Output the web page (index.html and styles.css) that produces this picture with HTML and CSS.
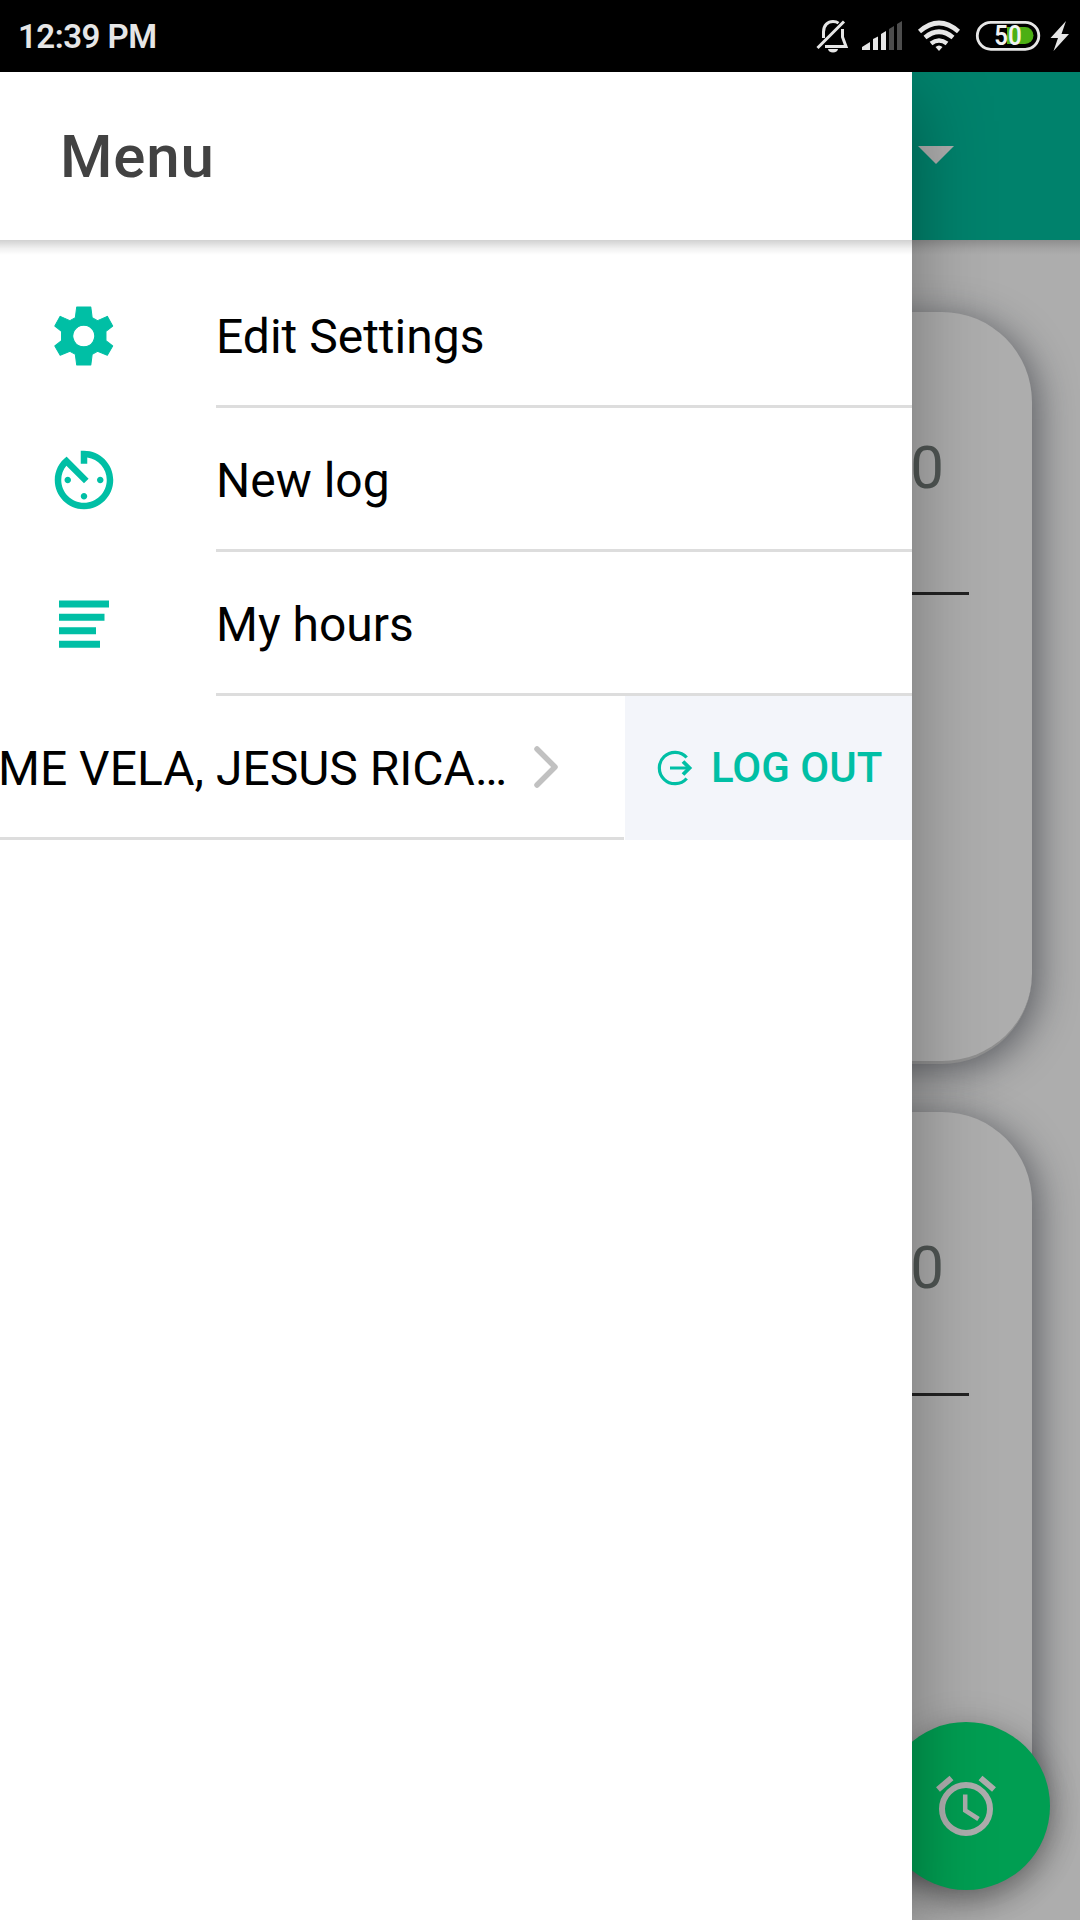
FILE: index.html
```html
<!DOCTYPE html>
<html lang="en">
<head>
<meta charset="utf-8">
<title>Menu</title>
<link rel="stylesheet" href="styles.css">
</head>
<body>
<div class="status">
  <span class="clock">12:39 PM</span>
  <svg class="status-icons" viewBox="800 0 280 72" width="280" height="72">
    <g fill="none" stroke="#e6e6e6" stroke-width="3">
      <path d="M817.5 48L844 21.500M823.500 38V32C823.500 25 828 21.500 833 21.500C835 21.500 837 22 838.500 23.200M842.500 29V37L846 46.500H825"/>
    </g>
    <path fill="#e6e6e6" d="M828 49h10a5 3.500 0 0 1-10 0z"/>
    <g fill="#e6e6e6">
      <path d="M862 50v-3l8-5v8zM873 50V39l5-2.500V50zM881 50V34l5-3V50z"/>
      <path fill="#4d4d4d" d="M889 50V29l5-3V50zM897 50V24l5-3V50z"/>
    </g>
    <g fill="none" stroke="#e6e6e6" stroke-width="4.600">
      <path d="M919.500 31.500Q939 14.500 958.500 31.500M925 37.500Q939 26 953 37.500M931 43.500Q939 37.500 947 43.500"/>
    </g>
    <path fill="#e6e6e6" d="M939 51l-3.500-4q3.500-3 7 0z"/>
    <path fill="#4caf14" d="M1007 27h18a8.500 8.500 0 0 1 0 17h-18z"/>
    <rect x="977.300" y="22.300" width="61.500" height="27" rx="13.500" fill="none" stroke="#e6e6e6" stroke-width="2.800"/>
    <text class="battery" x="994.200" y="45.300" textLength="27.500" lengthAdjust="spacingAndGlyphs">50</text>
    <path fill="#e6e6e6" d="M1066 21l-15.500 17h7.500l-4.500 13 15.500-17h-7.500z"/>
  </svg>
</div>
<div class="app">
  <main class="page">
    <header class="toolbar"><span class="caret"></span></header>
    <div class="cards">
      <section class="card"><div class="value">0</div><div class="rule"></div></section>
      <section class="card second"><div class="value">0</div><div class="rule"></div></section>
    </div>
  </main>
  <div class="fab">
    <svg viewBox="0 0 168 168" width="168" height="168" fill="none" stroke="#adadad" stroke-width="6">
      <circle cx="84" cy="87" r="24"/>
      <path d="M56 67.500L69.500 56M112 67.500L98.500 56"/>
      <path d="M83.200 72.500V88.500L96.500 97" stroke-width="4.500"/>
    </svg>
  </div>
  <aside class="drawer">
    <header class="drawer-head"><h1>Menu</h1></header>
    <nav class="menu">
      <a class="item">
        <span class="icon"><svg viewBox="0 0 266 276" width="89.500" height="92" preserveAspectRatio="none"><path fill="#00bfa5" stroke="#00bfa5" stroke-width="3" stroke-linejoin="round" fill-rule="evenodd" d="M112 51H154L158 83L174 92L203 79L219 108L199 124V152L219 168L203 196L174 184L158 193L154 225H112L108 193L92 184L63 196L47 168L67 152V124L47 108L63 79L92 92L108 83ZM133 105.500a32.500 32.500 0 1 0 .1 0z"/></svg></span>
        <span class="label">Edit Settings</span>
      </a>
      <a class="item">
        <span class="icon"><svg viewBox="0 0 24 24" width="78" height="78" fill="#00bfa5"><path d="M11 17c0 .55.45 1 1 1s1-.45 1-1-.45-1-1-1-1 .45-1 1zm0-14v4h2V5.080c3.390.49 6 3.390 6 6.920 0 3.870-3.130 7-7 7s-7-3.130-7-7c0-1.680.59-3.220 1.580-4.420L12 13l1.410-1.410-6.800-6.800v.02C4.420 6.450 3 9.050 3 12c0 4.970 4.020 9 9 9 4.970 0 9-4.030 9-9s-4.030-9-9-9h-1zm7 9c0-.55-.45-1-1-1s-1 .45-1 1 .45 1 1 1 1-.45 1-1zM6 12c0 .55.45 1 1 1s1-.45 1-1-.45-1-1-1-1 .45-1 1z"/></svg></span>
        <span class="label">New log</span>
      </a>
      <a class="item">
        <span class="icon"><svg viewBox="0 0 50 48" width="50" height="48" fill="#00bfa5"><path d="M0 .5h50V7.500H0zM0 13.700H45.500V20.700H0zM0 27.200H37V34.200H0zM0 40.700H41V47.700H0z"/></svg></span>
        <span class="label">My hours</span>
      </a>
      <div class="user">
        <div class="user-name"><span class="name">ME VELA, JESUS RICA…</span>
          <svg viewBox="0 0 24 42" width="24" height="42" fill="none" stroke="#c1c1c1" stroke-width="5.500" stroke-linecap="round" stroke-linejoin="round"><path d="M3 3L21 21L3 39"/></svg>
        </div>
        <button class="logout">
          <svg viewBox="0 0 36 36" width="36" height="36" fill="none" stroke="#00bfa5" stroke-width="3.200"><path d="M29.700 7.500A15.700 15.700 0 1 0 29.700 28.500M13 18H33" /><path d="M26 11.500L32.500 18L26 24.500" stroke-width="3.800"/></svg>
          <span class="logout-text">LOG OUT</span>
        </button>
      </div>
    </nav>
  </aside>
</div>
</body>
</html>
```
FILE: styles.css
```css
* { box-sizing: border-box; }
body { margin: 0; width: 1080px; height: 1920px; overflow: hidden; display: flex; flex-direction: column; font-family: Roboto, "Liberation Sans", sans-serif; background: #adadad; }
.status { height: 72px; flex: none; background: #000; display: flex; justify-content: space-between; color: #e6e6e6; }
.clock { padding-left: 18px; font-size: 33px; font-weight: 600; letter-spacing: -.5px; line-height: 74px; }
.status-icons { display: block; }
.battery { font-size: 27px; font-weight: 600; fill: #f2f2f2; }
.app { position: relative; height: 1848px; overflow: hidden; }
.page { height: 100%; background: #adadad; }
.toolbar { height: 168px; background: #00826c; display: flex; justify-content: flex-end; padding: 74px 126px 0 0; }
.caret { width: 36px; height: 18px; background: #adadad; clip-path: polygon(0 0, 100% 0, 50% 100%); }
.toolbar + .cards::before, .drawer-head + .menu::before { content: ""; display: block; height: 15px; margin-bottom: -15px; background: linear-gradient(rgba(0,0,0,.18), rgba(0,0,0,.06) 55%, transparent); }
.cards { display: flex; flex-direction: column; gap: 48px; }
.card { margin: 0 48px; height: 752px; flex: none; padding: 119px 63px 0; border-radius: 90px; border-bottom: 3px solid #8f8f8f; background: #adadad; box-shadow: 6px 6px 36px rgba(25,29,38,.54); }
.card:first-of-type { margin-top: 24px; }
.value { padding-right: 25px; text-align: right; font-size: 60px; line-height: 74px; color: #505654; }
.rule { margin-top: 87px; height: 3px; background: #222; }
.second .rule { margin-top: 88px; }
.fab { position: absolute; left: 882px; top: 1650px; width: 168px; height: 168px; border-radius: 50%; background: #009e52; box-shadow: 0 12px 30px rgba(0,0,0,.32), 0 3px 42px rgba(0,0,0,.12); }
.fab svg { display: block; }
.drawer { position: absolute; left: 0; top: 0; width: 912px; height: 1848px; background: #fff; box-shadow: 0 24px 72px rgba(0,0,0,.34); }
.drawer-head { height: 168px; display: flex; align-items: center; padding: 2px 0 0 60px; }
h1 { margin: 0; font-size: 60px; font-weight: 500; line-height: 72px; letter-spacing: .8px; color: #424242; }
.menu { display: flex; flex-direction: column; }
.item { height: 144px; display: flex; color: #000; }
.item:first-of-type { margin-top: 24px; }
.icon { width: 168px; margin-right: 48px; flex: none; display: grid; place-items: center; }
.label { flex: 1; border-bottom: 3px solid #ddd; font-size: 48px; line-height: 145px; }
.user { height: 144px; display: flex; }
.user-name { width: 624px; margin-right: 1px; border-bottom: 3px solid #ddd; display: flex; align-items: center; justify-content: space-between; padding-right: 66px; }
.name { margin-left: -2px; padding-top: 3px; font-size: 48px; white-space: nowrap; color: #000; }
.logout { flex: 1; border: 0; padding: 0 0 0 32px; background: #f3f5fa; display: flex; align-items: center; gap: 18px; font: 500 42px Roboto, sans-serif; color: #00bfa5; white-space: nowrap; }
.logout-text { padding-bottom: 2px; }
```
